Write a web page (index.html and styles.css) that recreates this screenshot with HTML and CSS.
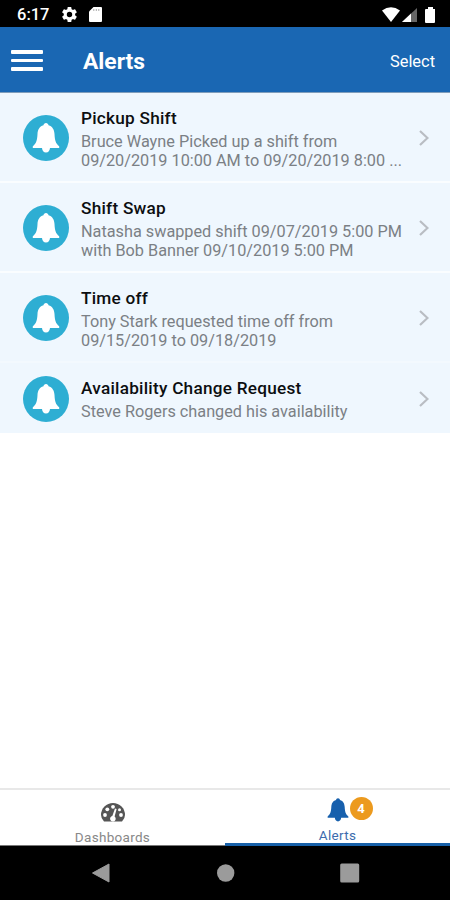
FILE: index.html
```html
<!DOCTYPE html>
<html lang="en">

<head>
    <meta charset="UTF-8">
    <title>Alerts</title>
    <link rel="stylesheet" href="styles.css">
</head>

<body>
    <svg class="defs">
        <symbol id="bell" viewBox="0 0 28 30">
            <path d="M14 0c1.500 0 2.200 1 2.500 2.200C20.800 3.500 22.300 7 22.500 11c.3 6.500 1.300 9.500 4.700 12.300V25H18c-.2 2.500-1.600 4.500-4 4.500s-3.800-2-4-4.500H.8v-1.700C4.200 20.500 5.200 17.500 5.500 11 5.700 7 7.200 3.500 11.500 2.200 11.800 1 12.500 0 14 0z" />
        </symbol>
        <symbol id="arrow" viewBox="0 0 10 16">
            <path d="M1 1l7.500 7L1 15" fill="none" stroke="#b9bdc3" stroke-width="2.200" />
        </symbol>
    </svg>
    <div class="status">
        <span class="time">6:17</span>
        <svg class="gear" viewBox="2 2 20 20">
            <path fill-rule="evenodd" d="M19.400 13c0-.3.1-.6.1-1s0-.7-.1-1l2.100-1.600c.2-.2.3-.5.100-.7l-2-3.400c-.1-.2-.4-.3-.6-.2l-2.500 1c-.5-.4-1.100-.7-1.700-1l-.4-2.600c0-.3-.2-.5-.4-.5h-4c-.3 0-.5.2-.5.5l-.4 2.600c-.6.3-1.200.6-1.700 1l-2.500-1c-.2-.1-.5 0-.6.2l-2 3.400c-.1.200-.1.500.1.700L4.500 11c0 .3-.1.600-.1 1s0 .7.1 1l-2.100 1.600c-.2.2-.2.500-.1.700l2 3.400c.1.200.4.300.6.200l2.500-1c.5.4 1.100.7 1.700 1l.4 2.600c0 .3.200.5.500.5h4c.2 0 .4-.2.400-.5l.4-2.600c.6-.3 1.200-.6 1.700-1l2.500 1c.2.100.5 0 .6-.2l2-3.400c.2-.2.100-.5-.1-.7zM12 15.600a3.600 3.600 0 1 1 0-7.200 3.600 3.600 0 0 1 0 7.200z" />
        </svg>
        <svg class="card" viewBox="0 0 13 15">
            <path d="M4.500 0H12q1 0 1 1v13q0 1-1 1H1q-1 0-1-1V4.500z" />
            <path d="M4.800 2v2M7.300 2v2M9.800 2v2" stroke="#aaa" />
        </svg>
        <svg class="signals" viewBox="0 0 54 16">
            <path d="M1 3.500Q10-3 19 3.500L10 15z" />
            <path d="M36 1v14H21z" fill="#666" />
            <path d="M30 6.500V15h-9z" />
            <path d="M45 2h2V0h5v2h2v13q0 1-1 1h-8q-1 0-1-1V3q0-1 1-1z" />
        </svg>
    </div>
    <div class="header">
        <div class="menu">
            <span></span>
            <span></span>
            <span></span>
        </div>
        <h1>Alerts</h1>
        <span class="select">Select</span>
    </div>
    <ul class="list">
        <li>
            <div class="icon"><svg><use href="#bell" /></svg></div>
            <div class="text">
                <h2>Pickup Shift</h2>
                <p>Bruce Wayne Picked up a shift from<br>09/20/2019 10:00 AM to 09/20/2019 8:00 ...</p>
            </div>
            <svg class="arrow"><use href="#arrow" /></svg>
        </li>
        <li>
            <div class="icon"><svg><use href="#bell" /></svg></div>
            <div class="text">
                <h2>Shift Swap</h2>
                <p>Natasha swapped shift 09/07/2019 5:00 PM<br>with Bob Banner 09/10/2019 5:00 PM</p>
            </div>
            <svg class="arrow"><use href="#arrow" /></svg>
        </li>
        <li class="soft">
            <div class="icon"><svg><use href="#bell" /></svg></div>
            <div class="text">
                <h2>Time off</h2>
                <p>Tony Stark requested time off from<br>09/15/2019 to 09/18/2019</p>
            </div>
            <svg class="arrow"><use href="#arrow" /></svg>
        </li>
        <li>
            <div class="icon"><svg><use href="#bell" /></svg></div>
            <div class="text">
                <h2>Availability Change Request</h2>
                <p>Steve Rogers changed his availability</p>
            </div>
            <svg class="arrow"><use href="#arrow" /></svg>
        </li>
    </ul>
    <div class="tabs">
        <div class="tab">
            <svg class="gauge" viewBox="0 0 24 19">
                <path d="M3 18.500Q0 15.500 0 12a12 12 0 0 1 24 0q0 3.500-3 6.500z" />
                <g fill="#fff">
                    <circle cx="4" cy="12" r="1.900" />
                    <circle cx="6.300" cy="6.300" r="1.900" />
                    <circle cx="12" cy="3.800" r="1.900" />
                    <circle cx="20" cy="12" r="1.900" />
                    <circle cx="18.500" cy="6.800" r="1.500" />
                    <path d="M14 5.500l1.600.5-2 7.500a2.800 2.800 0 1 1-2.300-.5z" />
                </g>
            </svg>
            <span>Dashboards</span>
        </div>
        <div class="tab active">
            <div class="bell">
                <svg><use href="#bell" /></svg>
                <b class="badge">4</b>
            </div>
            <span>Alerts</span>
        </div>
    </div>
    <div class="nav">
        <svg viewBox="0 0 20 20"><path d="M17 1v18L0.500 10z" stroke-width="1" stroke-linejoin="round" stroke="#9b9b9b" /></svg>
        <svg viewBox="0 0 20 20"><circle cx="9.700" cy="10" r="8.700" /></svg>
        <svg viewBox="0 0 20 20"><rect x="0.200" y="0.500" width="19" height="19" rx="1.500" /></svg>
    </div>
</body>

</html>
```
FILE: styles.css
```css
* {
    margin: 0;
    padding: 0;
    box-sizing: border-box;
}

body {
    width: 450px;
    height: 900px;
    display: flex;
    flex-direction: column;
    background: #fff;
    font-family: Roboto, sans-serif;
    overflow: hidden;
}

.defs {
    display: none;
}

.status {
    height: 27px;
    display: flex;
    align-items: center;
    padding: 2px 15px 0 17px;
    background: #000;
    color: #fff;
    fill: #fff;
}

.time {
    width: 45px;
    font-size: 16.5px;
    font-weight: 500;
}

.gear {
    width: 15px;
    height: 15px;
}

.card {
    width: 13px;
    height: 15px;
    margin-left: 12px;
}

.signals {
    width: 54px;
    height: 16px;
    margin-left: auto;
}

.header {
    height: 66px;
    display: flex;
    align-items: center;
    padding: 2px 15px 0 11px;
    background: #1a67b3;
    border-bottom: 1px solid #7f9dbb;
    color: #fff;
}

.menu {
    width: 72px;
    display: flex;
    flex-direction: column;
    gap: 5px;
}

.menu span {
    width: 32px;
    height: 4px;
    border-radius: 1px;
    background: #fff;
}

.menu span:nth-child(2) {
    height: 3px;
}

.header h1 {
    padding-top: 2px;
    font-size: 22.8px;
    font-weight: 700;
}

.select {
    margin-left: auto;
    padding-top: 2px;
    font-size: 16.4px;
}

.list {
    list-style: none;
}

.list li {
    height: 90px;
    display: flex;
    align-items: center;
    padding: 2px 21px 0 23px;
    background: #eff7fe;
    border-bottom: 2px solid #fafdff;
}

.list .soft {
    border-bottom-color: #f3f9fe;
}

.list li:last-child {
    height: 70px;
    padding-top: 1px;
    border-bottom: none;
}

.icon {
    width: 46px;
    height: 46px;
    margin-right: 12px;
    display: flex;
    align-items: center;
    justify-content: center;
    border-radius: 50%;
    background: #2eaed3;
}

.icon svg {
    width: 28px;
    height: 30px;
    fill: #fff;
}

.text {
    flex: 1;
    white-space: nowrap;
}

.text h2 {
    margin-bottom: 1px;
    line-height: 25px;
    font-size: 17.2px;
    font-weight: 500;
    letter-spacing: 0.25px;
    color: #0c0e10;
}

.text p {
    line-height: 19px;
    font-size: 16.25px;
    color: #7b8085;
}

.arrow {
    width: 10px;
    height: 16px;
}

.tabs {
    height: 58px;
    margin-top: auto;
    display: flex;
    border-top: 2px solid #e8e8e8;
}

.tab {
    flex: 1;
    display: flex;
    flex-direction: column;
    align-items: center;
    padding-top: 13px;
    border-bottom: 1px solid #777;
    font-size: 13.5px;
    line-height: 15px;
    letter-spacing: 0.3px;
    color: #888;
}

.gauge {
    width: 24px;
    height: 19px;
    margin-bottom: 8px;
    fill: #555;
}

.active {
    padding-top: 8px;
    border-bottom: 3px solid #1760a8;
    color: #3c6cae;
}

.bell {
    position: relative;
    width: 22px;
    height: 24px;
    margin-bottom: 6px;
}

.bell svg {
    width: 22px;
    height: 24px;
    fill: #1760ad;
}

.badge {
    position: absolute;
    top: -1px;
    left: 23px;
    width: 23px;
    height: 23px;
    border-radius: 50%;
    background: #ec9a1e;
    color: #fff;
    font-size: 13px;
    line-height: 24px;
    letter-spacing: 0;
    text-align: center;
}

.nav {
    height: 54px;
    display: flex;
    align-items: center;
    justify-content: center;
    gap: 104px;
    padding-left: 1px;
    background: #000;
    fill: #9b9b9b;
}

.nav svg {
    width: 20px;
    height: 20px;
}
```
